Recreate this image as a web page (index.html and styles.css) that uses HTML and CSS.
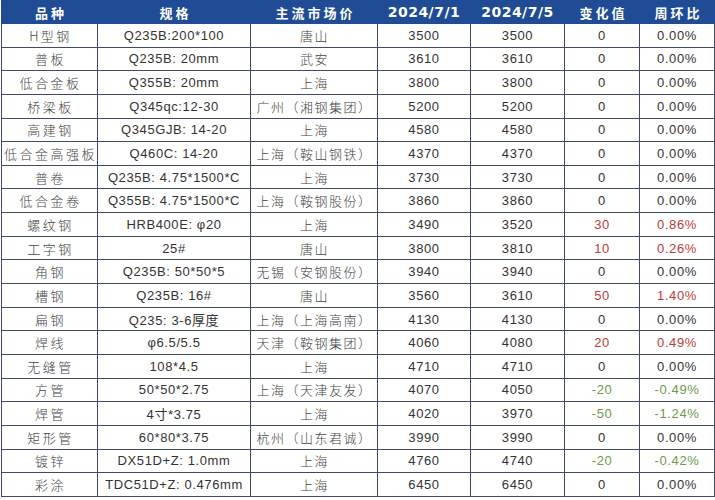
FILE: index.html
```html
<!DOCTYPE html>
<html lang="zh">
<head>
<meta charset="utf-8">
<link rel="stylesheet" href="styles.css">
</head>
<body>
<table class="price">
<colgroup>
<col class="c1"><col class="c2"><col class="c3"><col class="c4"><col class="c5"><col class="c6"><col class="c7">
</colgroup>
<thead>
<tr><th>品种</th><th>规格</th><th>主流市场价</th><th class="num">2024/7/1</th><th class="num">2024/7/5</th><th>变化值</th><th>周环比</th></tr>
</thead>
<tbody>
<tr><td class="cn">H型钢</td><td>Q235B:200*100</td><td class="mk">唐山</td><td>3500</td><td>3500</td><td>0</td><td>0.00%</td></tr>
<tr><td class="cn">普板</td><td>Q235B: 20mm</td><td class="mk">武安</td><td>3610</td><td>3610</td><td>0</td><td>0.00%</td></tr>
<tr><td class="cn">低合金板</td><td>Q355B: 20mm</td><td class="mk">上海</td><td>3800</td><td>3800</td><td>0</td><td>0.00%</td></tr>
<tr><td class="cn">桥梁板</td><td>Q345qc:12-30</td><td class="mk">广州（湘钢集团）</td><td>5200</td><td>5200</td><td>0</td><td>0.00%</td></tr>
<tr><td class="cn">高建钢</td><td>Q345GJB: 14-20</td><td class="mk">上海</td><td>4580</td><td>4580</td><td>0</td><td>0.00%</td></tr>
<tr><td class="cn">低合金高强板</td><td>Q460C: 14-20</td><td class="mk">上海（鞍山钢铁）</td><td>4370</td><td>4370</td><td>0</td><td>0.00%</td></tr>
<tr><td class="cn">普卷</td><td>Q235B: 4.75*1500*C</td><td class="mk">上海</td><td>3730</td><td>3730</td><td>0</td><td>0.00%</td></tr>
<tr><td class="cn">低合金卷</td><td>Q355B: 4.75*1500*C</td><td class="mk">上海（鞍钢股份）</td><td>3860</td><td>3860</td><td>0</td><td>0.00%</td></tr>
<tr><td class="cn">螺纹钢</td><td>HRB400E: φ20</td><td class="mk">上海</td><td>3490</td><td>3520</td><td class="up">30</td><td class="up">0.86%</td></tr>
<tr><td class="cn">工字钢</td><td>25#</td><td class="mk">唐山</td><td>3800</td><td>3810</td><td class="up">10</td><td class="up">0.26%</td></tr>
<tr><td class="cn">角钢</td><td>Q235B: 50*50*5</td><td class="mk">无锡（安钢股份）</td><td>3940</td><td>3940</td><td>0</td><td>0.00%</td></tr>
<tr><td class="cn">槽钢</td><td>Q235B: 16#</td><td class="mk">唐山</td><td>3560</td><td>3610</td><td class="up">50</td><td class="up">1.40%</td></tr>
<tr><td class="cn">扁钢</td><td>Q235: 3-6厚度</td><td class="mk">上海（上海高南）</td><td>4130</td><td>4130</td><td>0</td><td>0.00%</td></tr>
<tr><td class="cn">焊线</td><td>φ6.5/5.5</td><td class="mk">天津（鞍钢集团）</td><td>4060</td><td>4080</td><td class="up">20</td><td class="up">0.49%</td></tr>
<tr><td class="cn">无缝管</td><td>108*4.5</td><td class="mk">上海</td><td>4710</td><td>4710</td><td>0</td><td>0.00%</td></tr>
<tr><td class="cn">方管</td><td>50*50*2.75</td><td class="mk">上海（天津友发）</td><td>4070</td><td>4050</td><td class="down">-20</td><td class="down">-0.49%</td></tr>
<tr><td class="cn">焊管</td><td>4寸*3.75</td><td class="mk">上海</td><td>4020</td><td>3970</td><td class="down">-50</td><td class="down">-1.24%</td></tr>
<tr><td class="cn">矩形管</td><td>60*80*3.75</td><td class="mk">杭州（山东君诚）</td><td>3990</td><td>3990</td><td>0</td><td>0.00%</td></tr>
<tr><td class="cn">镀锌</td><td>DX51D+Z: 1.0mm</td><td class="mk">上海</td><td>4760</td><td>4740</td><td class="down">-20</td><td class="down">-0.42%</td></tr>
<tr><td class="cn">彩涂</td><td>TDC51D+Z: 0.476mm</td><td class="mk">上海</td><td>6450</td><td>6450</td><td>0</td><td>0.00%</td></tr>
</tbody>
</table>
</body>
</html>
```
FILE: styles.css
```css
html, body {
  margin: 0;
  padding: 0;
  background: #ffffff;
}
body {
  padding: 0 0 0 1px;
  font-family: "Liberation Sans", "Noto Sans CJK SC", sans-serif;
  color: #333333;
}
.price {
  border-collapse: collapse;
  table-layout: fixed;
  width: 713px;
  height: 497px;
  font-size: 13px;
}
.c1 { width: 96px; }
.c2 { width: 153px; }
.c3 { width: 127px; }
.c4 { width: 93px; }
.c5 { width: 94px; }
.c6 { width: 75px; }
.c7 { width: 75px; }
.price th {
  background: #1f4c94;
  color: #ffffff;
  font-family: "Noto Sans CJK SC", sans-serif;
  font-weight: 700;
  font-size: 13px;
  letter-spacing: 3px;
  height: 22px;
  padding: 0 0 0 3px;
  text-align: center;
  border: 1px solid #1f4c94;
}
.price th.num {
  font-family: "DejaVu Sans", sans-serif;
  letter-spacing: 0.5px;
  font-size: 14px;
  padding: 0;
}
.price td {
  border: 1px solid #3e4a66;
  text-align: center;
  padding: 0;
  white-space: nowrap;
  overflow: hidden;
  letter-spacing: 0.6px;
}
.price td.cn,
.price td.mk {
  font-family: "Noto Sans CJK SC", sans-serif;
  font-weight: 300;
  font-size: 13px;
  color: #444444;
}
.price td.cn {
  letter-spacing: 2.5px;
  padding-left: 2px;
}
.price td.mk {
  letter-spacing: 1.5px;
  padding-left: 1px;
}
.price td.up { color: #c0393b; }
.price td.down { color: #6f9a4c; }
```
